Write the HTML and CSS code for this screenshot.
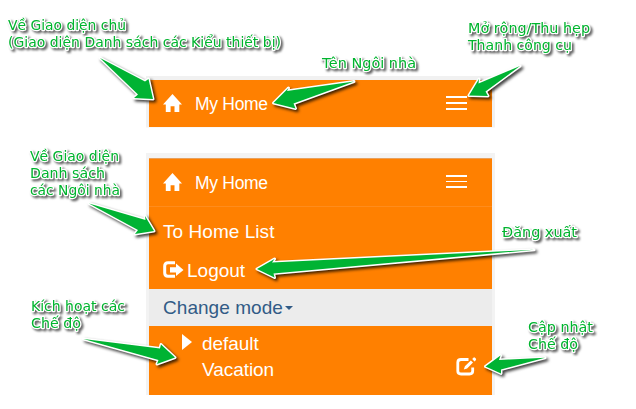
FILE: index.html
```html
<!DOCTYPE html>
<html lang="vi">
<head>
<meta charset="utf-8">
<title>My Home</title>
<link rel="stylesheet" href="styles.css">
</head>
<body>
<main class="stage">
  <section class="frame frame-collapsed">
    <header class="navbar">
      <svg class="home" viewBox="0 0 19 19"><path d="M9.5 0 19 10.4H16.3V18H11.5V12.2H7.6V18H2.8V10.4H0Z"/></svg>
      <span class="brand">My Home</span>
      <span class="toggle"><i></i><i></i><i></i></span>
    </header>
  </section>

  <section class="frame frame-expanded">
    <header class="navbar">
      <svg class="home" viewBox="0 0 19 19"><path d="M9.5 0 19 10.4H16.3V18H11.5V12.2H7.6V18H2.8V10.4H0Z"/></svg>
      <span class="brand">My Home</span>
      <span class="toggle"><i></i><i class="thin"></i><i></i></span>
    </header>
    <nav class="menu">
      <a class="item list"><span class="t-list">To Home List</span></a>
      <a class="item logout">
        <svg class="exit" viewBox="0 0 21 18"><path class="line" d="M12 1.8H5Q1.7 1.8 1.7 5V12Q1.7 15.2 5 15.2H12"/><path d="M7 6.2H13V2.5L20.5 9 13 15V11.4H7Z"/></svg>
        <span>Logout</span>
      </a>
      <a class="item mode"><span class="t-mode">Change mode</span><b class="caret"></b></a>
      <div class="modes">
        <a class="choice"><b class="play"></b><span>default</span></a>
        <a class="choice"><span>Vacation</span>
          <svg class="edit" viewBox="0 0 21 19"><path class="line" d="M12.5 2.5H5Q1.8 2.5 1.8 5.5V14Q1.8 17 5 17H13.5Q16.7 17 16.7 14V10.5"/><path d="M7.8 12.6 8.9 9.3 14.8 3.4 17 5.6 11.1 11.5Z M16.2 2 17.4 .7Q18.2 0 19 .8L19.8 1.6Q20.5 2.4 19.8 3.2L18.5 4.4Z"/></svg>
        </a>
      </div>
    </nav>
  </section>

  <svg class="notes" viewBox="0 0 636 409">
    <g class="arrows">
      <path d="M100 58 145 81.5 148.5 79 153 99 134 98 138 94.5Z"/>
      <path d="M354 81.5 287 91 288.5 88 273.500 103 295.5 108.5 293.5 103.5Z"/>
      <path d="M520 66 478.5 83.5 479 79 469 95.5 488 96 485.5 91.5Z"/>
      <path d="M89 203.500 145.5 220 145 216 154 231 135 234 138 230Z"/>
      <path d="M534 249.800 272 262.5 274.500 259 257 269 274.500 277.5 273.5 273.5Z"/>
      <path d="M83.500 339 160 348.5 161 344.500 175 357.5 157 364 158.5 360Z"/>
      <path d="M545 357.800 499 360 500.500 355.5 485.500 366.5 501 373.500 501 369.5Z"/>
    </g>
    <g class="labels">
      <text x="8" y="29.5" textLength="118" lengthAdjust="spacingAndGlyphs">Về Giao diện chủ</text>
      <text x="8" y="46.5" textLength="273" lengthAdjust="spacingAndGlyphs">(Giao diện Danh sách các Kiểu thiết bị)</text>
      <text x="322" y="67.5" textLength="94" lengthAdjust="spacingAndGlyphs">Tên Ngôi nhà</text>
      <text x="468" y="32.5" textLength="122" lengthAdjust="spacingAndGlyphs">Mở rộng/Thu hẹp</text>
      <text x="468" y="49.5" textLength="104" lengthAdjust="spacingAndGlyphs">Thanh công cụ</text>
      <text x="30" y="160.5" textLength="89" lengthAdjust="spacingAndGlyphs">Về Giao diện</text>
      <text x="30" y="177.5" textLength="75" lengthAdjust="spacingAndGlyphs">Danh sách</text>
      <text x="30" y="194.5" textLength="90" lengthAdjust="spacingAndGlyphs">các Ngôi nhà</text>
      <text x="502" y="236.5" textLength="75" lengthAdjust="spacingAndGlyphs">Đăng xuất</text>
      <text x="31" y="310.5" textLength="94" lengthAdjust="spacingAndGlyphs">Kích hoạt các</text>
      <text x="31" y="327.5" textLength="50" lengthAdjust="spacingAndGlyphs">Chế độ</text>
      <text x="528" y="331.5" textLength="65" lengthAdjust="spacingAndGlyphs">Cập nhật</text>
      <text x="528" y="348.5" textLength="50" lengthAdjust="spacingAndGlyphs">Chế độ</text>
    </g>
  </svg>
</main>
</body>
</html>
```

FILE: styles.css
```css
* { box-sizing: border-box; }
body { margin: 0; background: #fff; font-family: "Liberation Sans", Arial, sans-serif; }
.stage { position: relative; width: 636px; height: 409px; padding: 76px 0 0 146px; overflow: hidden; }
.frame { width: 349px; background: #f3f3f3; padding: 4px 3px 0; }
.frame-collapsed { height: 53px; background: linear-gradient(#f1f1f1 0 50px, #f7f1ec 51px, #fff 52px); margin-bottom: 24px; }
.frame-expanded { height: 242px; padding-top: 5px; }
.navbar { height: 47px; display: flex; align-items: center; background: #ff8000; color: #fff; padding: 0 25px 0 14px; }
.frame-expanded .navbar { height: 49px; border-top: 1px solid #e8a05c; border-bottom: 1px solid #ff8c1c; }
.home { width: 19px; height: 19px; margin-bottom: 1px; fill: #fff; }
.brand { margin-left: 13px; font-size: 17.5px; line-height: 20px; letter-spacing: -.3px; }
.toggle { margin: 0 0 2px auto; width: 21px; display: flex; flex-direction: column; gap: 4px; }
.toggle i { height: 2px; background: #fff; }
.toggle .thin { height: 1px; }
.menu { color: #fff; font-size: 19px; line-height: 22px; background: #ff8000; }
.item { display: flex; align-items: center; padding-left: 14px; }
.list { height: 50px; }
.t-list { letter-spacing: .05px; }
.logout { height: 32px; padding-bottom: 4px; }
.exit { width: 21px; height: 18px; margin: 0 3px 2px 0; fill: #fff; }
.line { fill: none; stroke: #fff; stroke-width: 3; }
.mode { height: 37px; background: #ececec; color: #315b86; }
.t-mode { letter-spacing: .05px; }
.caret { margin-left: 2px; border: 4px solid transparent; border-top-color: #315b86; border-bottom: 0; }
.modes { height: 69px; padding: 5px 15px 0 33px; }
.choice { display: flex; align-items: center; height: 26px; padding-left: 20px; letter-spacing: -.05px; }
.choice:first-child { padding-left: 0; }
.play { border: 8.5px solid transparent; border-left: 10px solid #fff; border-right: 0; margin-right: 10px; margin-top: -5px; }
.edit { width: 21px; height: 19px; margin: -7px 0 0 auto; fill: #fff; }
.edit .line { stroke-width: 2.8; }
.notes { position: absolute; inset: 0; width: 636px; height: 409px; }
.labels { font: 13.5px "DejaVu Sans", Verdana, sans-serif; fill: #00b42e; stroke: #fff; stroke-width: 2.5px; stroke-linejoin: round; paint-order: stroke; filter: drop-shadow(2px 2px 1px rgba(0, 0, 0, .6)); }
.arrows { fill: #00b333; stroke: #fff; stroke-width: 3px; stroke-linejoin: round; paint-order: stroke; filter: drop-shadow(2px 2px 1.5px rgba(0, 0, 0, .75)); }
```
